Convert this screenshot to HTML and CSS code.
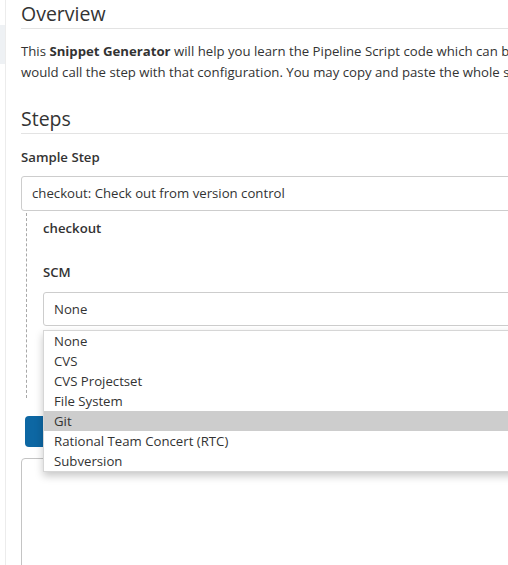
FILE: index.html
```html
<!DOCTYPE html>
<html lang="en">
<head>
<meta charset="utf-8">
<title>Snippet Generator</title>
<link rel="stylesheet" href="styles.css">
</head>
<body>
<div class="layout">
  <aside class="side">
    <div class="side-item"></div>
  </aside>
  <main class="main">
    <h2 class="section-title">Overview</h2>
    <p class="intro">
      <span class="intro-line">This <b>Snippet Generator</b> will help you learn the Pipeline Script code which can be used to define various steps.</span>
      <span class="intro-line">would call the step with that configuration. You may copy and paste the whole statement into your script.</span>
    </p>
    <h2 class="section-title steps">Steps</h2>
    <div class="field">
      <div class="field-label">Sample Step</div>
      <div class="select">checkout: Check out from version control</div>
    </div>
    <div class="nested">
      <div class="nested-title">checkout</div>
      <div class="field scm">
        <div class="field-label">SCM</div>
        <div class="select-wrap">
          <div class="select">None</div>
          <ul class="dropdown">
            <li class="option">None</li>
            <li class="option">CVS</li>
            <li class="option">CVS Projectset</li>
            <li class="option">File System</li>
            <li class="option is-active">Git</li>
            <li class="option">Rational Team Concert (RTC)</li>
            <li class="option">Subversion</li>
          </ul>
        </div>
      </div>
    </div>
    <button class="btn">Generate Pipeline Script</button>
    <div class="output"></div>
  </main>
</div>
</body>
</html>
```
FILE: styles.css
```css
html, body {
  margin: 0;
  padding: 0;
  overflow: hidden;
  background: #fff;
}
body {
  width: 508px;
  height: 565px;
  font-family: "Open Sans", "Noto Sans", sans-serif;
  font-size: 13.2px;
  color: #333;
}
.layout {
  display: flex;
  height: 565px;
}
.side {
  width: 5px;
  flex: none;
  border-right: 1px solid #ececec;
  padding-top: 25px;
}
.side-item {
  height: 39px;
  background: #eef1f4;
}
.main {
  flex: none;
  width: 700px;
  padding-left: 15px;
}
.section-title {
  margin: 0;
  font-size: 19.5px;
  font-weight: 400;
  line-height: 28px;
  border-bottom: 1px solid #e3e3e3;
}
.intro {
  margin: 12px 0 0;
  line-height: 21px;
}
.intro-line {
  display: block;
  white-space: nowrap;
}
.intro b {
  font-weight: 700;
}
.steps {
  margin-top: 22px;
}
.field-label {
  font-weight: 600;
  line-height: 20px;
}
.field {
  margin-top: 13px;
}
.field-label {
  margin-bottom: 9px;
}
.select {
  box-sizing: border-box;
  height: 35px;
  border: 1px solid #cdcdcd;
  border-radius: 3px;
  padding: 0 10px;
  line-height: 33px;
}
.nested {
  margin: 2px 0 0 5px;
  padding: 4px 0 0 16px;
  border-left: 1px dashed #a8a8a8;
  height: 185px;
  box-sizing: border-box;
}
.nested-title {
  font-weight: 600;
  line-height: 20px;
  margin-top: 0.5px;
}
.scm {
  margin-top: 24.5px;
}
.scm .field-label {
  margin-bottom: 9.5px;
}
.scm .select {
  height: 34px;
  line-height: 32px;
}
.select-wrap {
  position: relative;
}
.dropdown {
  position: absolute;
  left: 0;
  top: 38.5px;
  width: 520px;
  margin: 0;
  padding: 0;
  list-style: none;
  background: #fff;
  border: 1px solid #d6d6d6;
  box-shadow: 0 4px 8px rgba(0, 0, 0, 0.22);
  z-index: 2;
}
.option {
  height: 20px;
  line-height: 20px;
  padding-left: 10px;
}
.option.is-active {
  background: #cdcdcd;
}
.btn {
  display: block;
  margin: 18px 0 0 4px;
  width: 200px;
  height: 31px;
  border: 0;
  border-radius: 4px;
  background: #0d67a3;
  color: #fff;
  font-family: inherit;
  font-size: 13px;
}
.output {
  margin-top: 11px;
  height: 200px;
  border: 1px solid #c4c4c4;
  border-radius: 4px;
}
```
